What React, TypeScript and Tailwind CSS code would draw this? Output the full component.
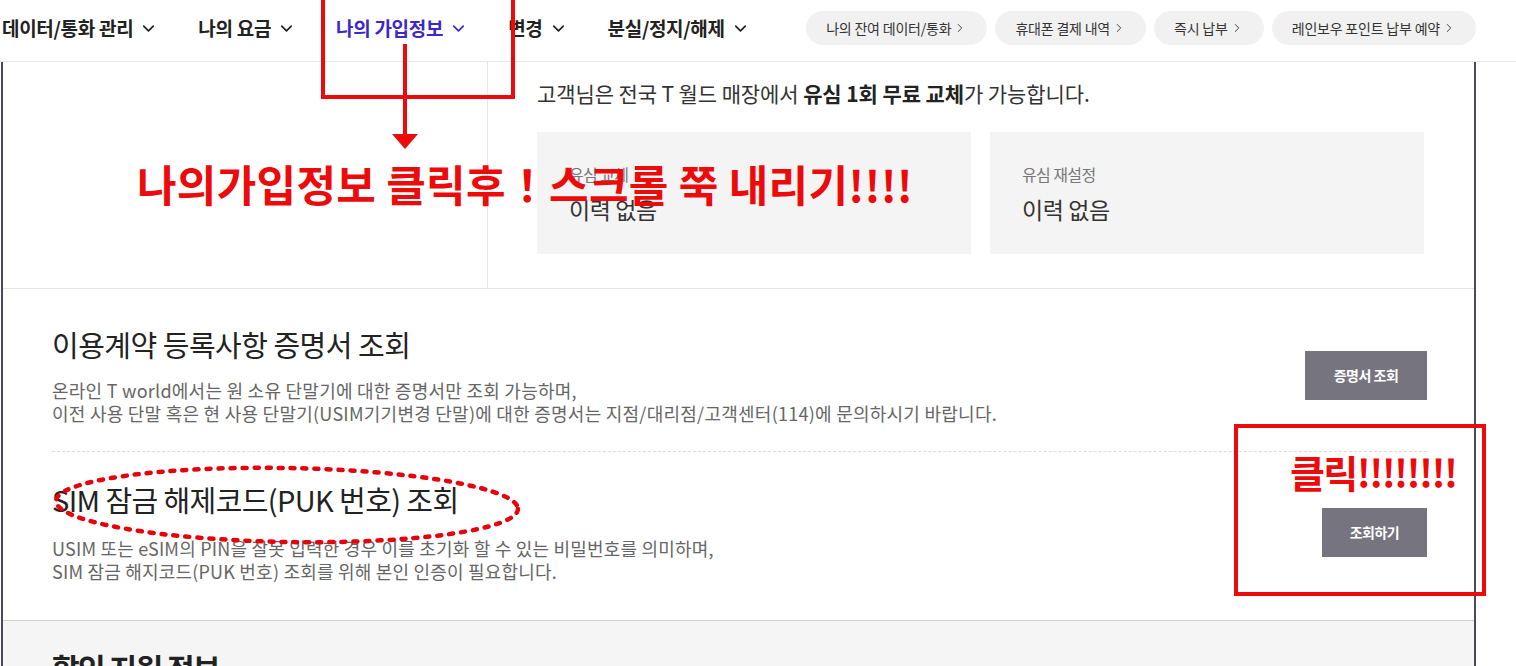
import React from "react";
import { ChevronDown, ChevronRight } from "lucide-react";

const navItems = [
  { label: "데이터/통화 관리", active: false },
  { label: "나의 요금", active: false },
  { label: "나의 가입정보", active: true },
  { label: "변경", active: false },
  { label: "분실/정지/해제", active: false },
];

const quickLinks = [
  "나의 잔여 데이터/통화",
  "휴대폰 결제 내역",
  "즉시 납부",
  "레인보우 포인트 납부 예약",
];

const UsimCard = ({ label }: { label: string }) => (
  <div className="w-[434px] h-[122px] bg-[#f4f4f4] px-[32px] pt-[30px]">
    <p className="text-[16px] leading-[24px] text-[#777] tracking-[-0.6px]">{label}</p>
    <p className="mt-[8px] text-[23px] leading-[30px] text-[#333] tracking-[-0.4px]">이력 없음</p>
  </div>
);

const App = () => {
  return (
    <div className="relative w-[1516px] h-[666px] overflow-hidden bg-white font-['Noto_Sans_CJK_KR','Noto_Sans',sans-serif]">
      {/* top menu */}
      <header className="h-[62px] border-b border-[#e8e8e8] flex items-center pb-[5px]">
        <nav className="flex items-center gap-[40px] pl-[2px] text-[19px] font-bold tracking-[-0.3px] text-[#222]">
          {navItems.map((item) => (
            <span
              key={item.label}
              className={
                item.active
                  ? "flex items-center gap-[6px] text-[#3d27c7]"
                  : "flex items-center gap-[6px]"
              }
            >
              {item.label}
              <ChevronDown size={19} strokeWidth={2.2} />
            </span>
          ))}
        </nav>
        <div className="ml-auto mr-[40px] flex gap-[8px]">
          {quickLinks.map((link) => (
            <span
              key={link}
              className="h-[34px] px-[20px] rounded-full bg-[#f1f1f1] flex items-center gap-[2px] text-[14px] text-[#333] tracking-[-0.2px]"
            >
              {link}
              <ChevronRight size={14} strokeWidth={1.6} />
            </span>
          ))}
        </div>
      </header>

      <main className="ml-[1px] w-[1475px] border-x-2 border-[#4a4955]">
        {/* usim info */}
        <section className="flex h-[227px] border-b border-[#e3e3e3]">
          <div className="w-[485px] border-r border-[#e8e8e8]" />
          <div className="pl-[49px] pt-[16px]">
            <p className="text-[21px] leading-[30px] text-[#333] tracking-[-0.1px]">
              고객님은 전국 T 월드 매장에서 <b className="font-bold text-[#222]">유심 1회 무료 교체</b>가 가능합니다.
            </p>
            <div className="mt-[24px] flex gap-[19px]">
              <UsimCard label="유심 교체" />
              <UsimCard label="유심 재설정" />
            </div>
          </div>
        </section>

        <section className="pl-[49px] pr-[47px]">
          <div className="flex items-center justify-between pt-[37px] pb-[26px] border-b border-dashed border-[#dcdcdc]">
            <div>
              <h2 className="text-[29px] leading-[36px] tracking-[-0.5px] text-[#222]">이용계약 등록사항 증명서 조회</h2>
              <p className="mt-[17px] text-[18px] leading-[23px] tracking-[0.25px] text-[#666]">
                온라인 T world에서는 원 소유 단말기에 대한 증명서만 조회 가능하며,
                <br />
                이전 사용 단말 혹은 현 사용 단말기(USIM기기변경 단말)에 대한 증명서는 지점/대리점/고객센터(114)에 문의하시기 바랍니다.
              </p>
            </div>
            <button className="w-[122px] h-[49px] bg-[#76747f] text-white text-[14px] font-bold tracking-[-0.5px]">
              증명서 조회
            </button>
          </div>
          <div className="flex items-center justify-between pt-[29px] pb-[37px]">
            <div>
              <h2 className="text-[29px] leading-[36px] tracking-[-0.6px] text-[#222]">SIM 잠금 해제코드(PUK 번호) 조회</h2>
              <p className="mt-[20px] text-[18px] leading-[23px] tracking-[0.2px] text-[#666]">
                USIM 또는 eSIM의 PIN을 잘못 입력한 경우 이를 초기화 할 수 있는 비밀번호를 의미하며,
                <br />
                SIM 잠금 해지코드(PUK 번호) 조회를 위해 본인 인증이 필요합니다.
              </p>
            </div>
            <button className="w-[105px] h-[49px] bg-[#76747f] text-white text-[14px] font-bold tracking-[-0.5px]">
              조회하기
            </button>
          </div>
        </section>

        <section className="border-t border-[#cfcfcf] bg-[#f5f5f5] pl-[49px] pt-[26px] h-[120px]">
          <h2 className="text-[30px] leading-[40px] font-bold tracking-[-1.5px] text-[#222]">할인 지원 정보</h2>
        </section>
      </main>

      {/* red annotations drawn on top of the capture */}
      <svg className="absolute left-0 top-0 pointer-events-none" width="1516" height="666" viewBox="0 0 1516 666">
        <rect x="323" y="-10" width="190" height="107" fill="none" stroke="#ec0a0a" strokeWidth="4" />
        <line x1="405" y1="44" x2="405" y2="136" stroke="#ec0a0a" strokeWidth="4" />
        <polygon points="392,134 418,134 405,149" fill="#ec0a0a" />
        <rect x="1236" y="426" width="248" height="168" fill="none" stroke="#ec0a0a" strokeWidth="4" />
        <ellipse
          cx="287"
          cy="505"
          rx="231"
          ry="37"
          fill="none"
          stroke="#e8000b"
          strokeWidth="4.5"
          strokeDasharray="4 8"
          strokeLinecap="round"
          transform="rotate(1 287 505)"
        />
      </svg>
      <div className="absolute left-[137px] top-[159px] text-[43px] leading-[48px] font-bold text-[#ec0a0a] tracking-[0.3px] whitespace-nowrap">
        나의가입정보 클릭후！스크롤 쭉 내리기!!!!
      </div>
      <div className="absolute left-[1290px] top-[450px] text-[38px] leading-[44px] font-bold text-[#ec0a0a] tracking-[-1.6px] whitespace-nowrap">
        클릭!!!!!!!!
      </div>
    </div>
  );
};

export default App;
